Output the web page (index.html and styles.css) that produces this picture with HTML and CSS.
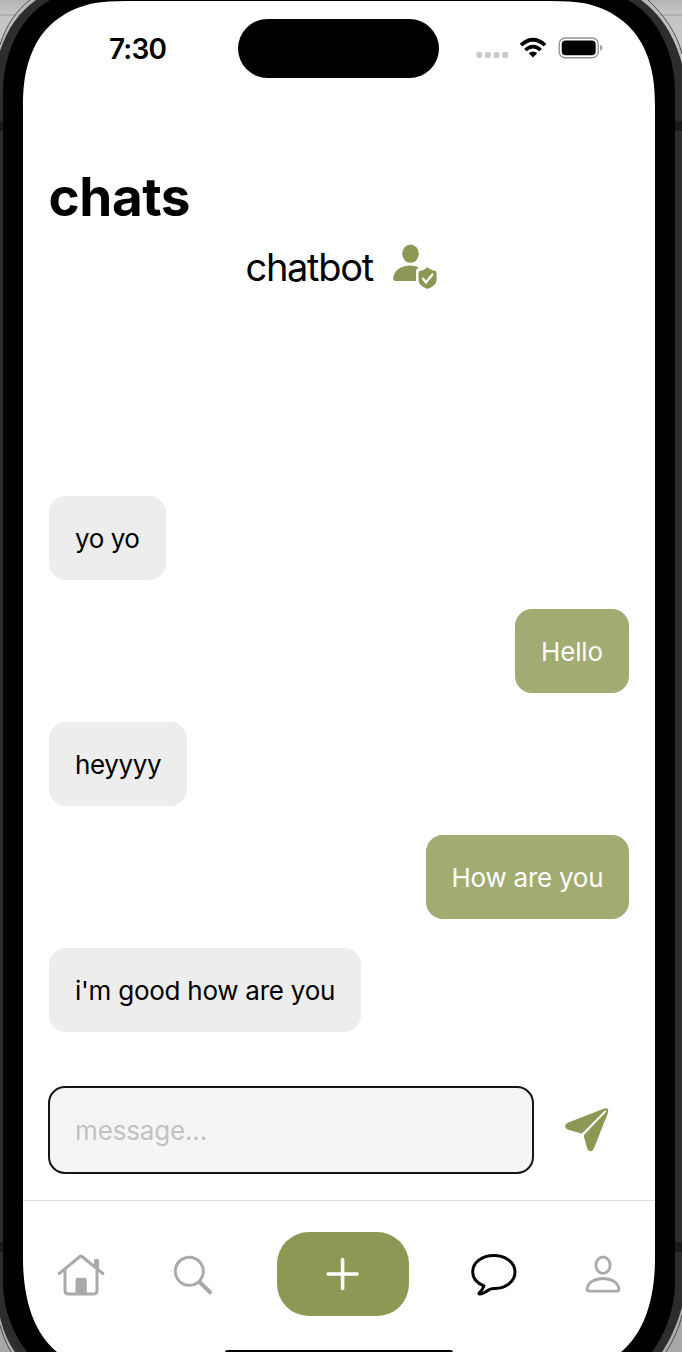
FILE: index.html
```html
<!DOCTYPE html>
<html lang="en">
<head>
<meta charset="utf-8">
<title>chats</title>
<link rel="stylesheet" href="styles.css">
</head>
<body>
<div class="device">
  <svg class="frame" viewBox="0 0 682 1352" aria-hidden="true">
    <defs>
      <linearGradient id="desk" x1="0" y1="0" x2="0" y2="1">
        <stop offset="0" stop-color="#b4b4b4"/><stop offset="0.01" stop-color="#c5c5c4"/><stop offset="0.05" stop-color="#c9c8c6"/><stop offset="1" stop-color="#a8a8a8"/>
      </linearGradient>
    </defs>
    <rect width="682" height="1352" fill="url(#desk)"/>
    <path d="M0 15H682M0 49H682" stroke="#aaa" stroke-width="1.5"/>
    <path d="M0 51C7 29 19 12 36 0H641C660 14 674 34 682 64V1307C677 1325 670 1340 662 1352H15C8 1342 3 1331 0 1317Z" fill="#2d2d2d"/>
    <path d="M0 48C7 27 18 11 33 0M645 0C663 16 675 34 682 59M682 1311C677 1328 671 1340 664 1352M0 1321C3 1333 8 1343 13 1352" fill="none" stroke="#b5b5b5" stroke-width="1"/>
    <path d="M0 45C6 25 17 10 30 0M648 0C665 16 677 34 682 54M682 1315C679 1328 673 1341 666 1352M0 1325C3 1336 7 1345 11 1352" fill="none" stroke="#4a4a4a" stroke-width="1"/>
    <path d="M0 121H3V131H0ZM675 121H682V131H675ZM0 1242H3V1252H0ZM675 1242H682V1252H675Z" fill="#1a1a1a"/>
    <path d="M3 90C4 48 23 15 50 0H628C655 15 674 48 675 90V1285C674 1311 665 1334 652 1352H27C13 1334 4 1311 3 1285Z" fill="#000"/>
    <path d="M23 106C23 79 27 63 34 48C45 24 68 8 95 3Q106 1 128 1H550Q572 1 583 3C610 8 633 24 644 48C651 63 655 79 655 106V1258C655 1300 644 1333 621 1352H57C34 1333 23 1300 23 1258Z" fill="#fff"/>
  </svg>
  <main class="screen">
    <header class="status">
      <span class="time">7:30</span>
      <span class="island"></span>
      <svg class="indicators" width="130" height="24" viewBox="0 0 130 24">
        <g fill="#c9c9c9"><rect x=".3" y="16" width="6" height="6" rx="2"/><rect x="8.9" y="16" width="6" height="6" rx="2"/><rect x="17.5" y="16" width="6" height="6" rx="2"/><rect x="26.1" y="16" width="6" height="6" rx="2"/></g>
        <g fill="none" stroke="#000" stroke-width="3.6"><path d="M45 9.1Q57 -1.6 69 9.1"/><path d="M49.3 14Q57 7.3 64.7 14"/></g>
        <path d="M52.8 17.2Q57 13.6 61.2 17.2L57 21.5Z"/>
        <rect x="83.2" y="2" width="39" height="19.8" rx="6" fill="#fff" stroke="#929292" stroke-width="1.4"/>
        <rect x="85.7" y="4.5" width="34" height="14.8" rx="4"/>
        <path d="M124.3 8.8Q126.3 9.7 126.3 11.8T124.3 15Z" fill="#888"/>
      </svg>
    </header>
    <h1 class="title">chats</h1>
    <div class="contact">
      <span>chatbot</span>
      <svg width="46" height="46" viewBox="0 0 46 46" fill="#8b9954">
        <ellipse cx="18.5" cy="9.7" rx="8.3" ry="9.1"/>
        <path d="M3.5 37Q1.1 37 1.1 34.5C2 26.5 9 21.6 18 21.6Q23 21.6 26.7 23.5Q24 25 24 27V37Z"/>
        <path d="M35.5 23.2Q39.5 26.4 43 26.8Q44.6 27.1 44.6 29V36Q44.6 41.5 35.5 45Q26.5 41.5 26.5 36V29Q26.5 27.1 28.5 26.8Q32 26.2 35.5 23.2Z"/>
        <path d="M31 34.7L34 38.5L40.3 30.5" fill="none" stroke="#fff" stroke-width="2.3" stroke-linecap="round"/>
      </svg>
    </div>
    <section class="messages">
      <p class="bubble w1"><span>yo yo</span></p>
      <p class="bubble sent w2"><span>Hello</span></p>
      <p class="bubble w3"><span>heyyyy</span></p>
      <p class="bubble sent w4"><span>How are you</span></p>
      <p class="bubble w5"><span>i'm good how are you</span></p>
    </section>
    <div class="composer">
      <div class="field">message...</div>
      <svg width="46" height="46" viewBox="0 0 46 46" fill="#8b9954">
        <path d="M17.2 26.5L3.5 22.5Q1.1 21.5 1.1 19Q1.1 16.9 4.3 15.6L40.3 1.6Q42.2 1 43.2 1.6L18.2 26.2Z"/>
        <path d="M43.8 2.2Q44.7 3.5 43.9 6L30 41.2Q28.8 44.2 26.4 44.2Q24 44.2 23.1 41.3L19.8 29.2Q19.7 28 20.5 27.2Z"/>
        <path d="M43 1.3Q44.6 2 43.9 4.4L40 7L39.5 3Z"/>
        <path d="M18.9 27.5L41.3 4.4" stroke="#fff" stroke-width="1.8" stroke-linecap="round"/>
      </svg>
    </div>
    <nav class="tabs">
      <svg class="home" width="48" height="44" viewBox="0 0 48 44">
        <g fill="none" stroke="#aaa" stroke-width="3" stroke-linecap="round" stroke-linejoin="round"><path d="M2.2 20.5L23 3.5Q24 2.7 25 3.5L45.8 20.5M8 17V37.5Q8 41 11.5 41H36.5Q40 41 40 37.5V17"/></g>
        <path d="M18.5 41V27Q18.5 24.8 20.5 24.8H27.7Q29.8 24.8 29.8 27V41ZM37 13V8Q37 5.7 39.5 5.7T42 8V17Z" fill="#aaa"/>
      </svg>
      <svg class="search" width="42" height="42" viewBox="0 0 42 42" fill="none" stroke="#aaa"><circle cx="17.3" cy="16.3" r="14" stroke-width="3"/><path d="M27.6 27.1L38.1 37.2" stroke-width="4.2" stroke-linecap="round"/></svg>
      <button class="add" aria-label="Add"><svg width="36" height="36" viewBox="0 0 36 36" stroke="#fff" stroke-width="3.6" stroke-linecap="round"><path d="M17.6 3.5V32.5M3.1 18H32.1"/></svg></button>
      <svg class="chat" width="46" height="44" viewBox="0 0 46 44" fill="none" stroke="#000" stroke-width="3" stroke-linejoin="round"><path d="M13 32.8C5.8 30 1.7 25 1.7 18.9C1.7 9.5 11 2.5 22.8 2.5S44 9.5 44 18.9S34.8 35.8 22.9 35.4Q20 35.3 18.4 36.6C15 39 11.5 41.1 8.6 41.1Q7.3 41 8.6 39.6Q11.5 37 13 32.8Z"/></svg>
      <svg class="person" width="36" height="40" viewBox="0 0 36 40" fill="none" stroke="#aaa" stroke-width="2.8" stroke-linejoin="round"><ellipse cx="18" cy="11.2" rx="7.1" ry="8.2"/><path d="M4.3 37.1Q1.9 37.1 2.1 34.7C3 28.5 9.5 24.5 18 24.5S33 28.5 33.9 34.7Q34.1 37.1 31.7 37.1Z"/></svg>
    </nav>
    <div class="home-indicator"></div>
  </main>
</div>
</body>
</html>
```
FILE: styles.css
```css
* { box-sizing: border-box; }
body { margin: 0; font-family: Inter, "Liberation Sans", sans-serif; color: #000; }
.device { width: 682px; height: 1352px; display: grid; overflow: hidden; }
.frame, .screen { grid-area: 1 / 1; }
.frame { width: 682px; height: 1352px; display: block; }
.screen { z-index: 1; width: 632px; height: 1352px; margin-left: 23px; display: flex; flex-direction: column; }
.screen > * { flex: none; }
.status { height: 97px; padding-top: 19px; display: grid; grid-template-columns: 215.4px 201px 1fr; align-items: start; }
.time { padding: 13px 0 0 86px; font-size: 28px; line-height: 34px; font-weight: 600; letter-spacing: -.85px; }
.island { height: 59px; border-radius: 30px; background: #000; }
.indicators { margin: 17px 0 0 36.5px; }
.title { margin: 68px 0 0 25.5px; height: 64px; font-size: 53px; line-height: 64px; font-weight: 700; letter-spacing: -.4px; }
.contact { height: 48px; margin-top: 14px; padding-left: 222.5px; display: flex; gap: 18px; font-size: 38px; line-height: 48px; letter-spacing: -1.3px; }
.contact span { width: 128px; white-space: nowrap; }
.contact svg { margin-top: 1px; }
.messages { display: flex; flex-direction: column; gap: 29px; margin-top: 205.4px; padding: 0 26px; }
.bubble { margin: 0; height: 84px; border-radius: 17px; background: #ededed; padding: 26px 26px 24px; font-size: 26px; line-height: 34px; white-space: nowrap; }
.sent { align-self: flex-end; background: #a1ab72; color: #fff; }
.w1 { width: 117px; letter-spacing: -.45px; }
.w2 { width: 114px; letter-spacing: -.15px; }
.w3 { width: 138px; letter-spacing: -.35px; }
.w4 { width: 203.5px; letter-spacing: -.25px; }
.w5 { width: 312px; letter-spacing: -.25px; }
.composer { margin: 54.1px 0 0 25px; height: 88px; display: flex; align-items: center; gap: 30px; }
.field { width: 486px; height: 88px; border: 2px solid #151515; border-radius: 17px; background: #f5f5f5; padding: 26px 25px; font-size: 26px; line-height: 34px; color: #c2c2c2; letter-spacing: -.15px; }
.tabs { margin-top: 25.5px; height: 150px; border-top: 1px solid #dedede; display: grid; grid-template-columns: 115px 139px 132px 63px 1fr; align-items: start; }
.home { margin: 52px 0 0 34.4px; }
.search { margin: 54px 0 0 34.4px; }
.add { border: 0; width: 132px; height: 84px; margin-top: 31.5px; padding: 0; background: #8b9954; border-radius: 32px; display: grid; place-items: center; }
.chat { margin: 52px 0 0 62px; }
.person { margin: 53px 0 0 113px; }
.home-indicator { width: 228px; height: 5px; margin-left: 201.5px; background: #000; border-radius: 4px; }
```
